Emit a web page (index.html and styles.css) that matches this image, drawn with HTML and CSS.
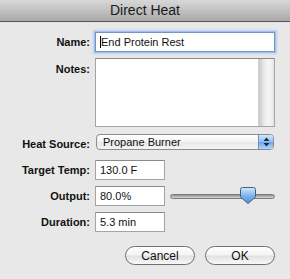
FILE: index.html
```html
<!DOCTYPE html>
<html>
  <head>
    <title>Direct Heat</title>
    <link rel="stylesheet" href="styles.css">
  </head>
  <body>
    <div class="window">
      <div class="titlebar">Direct Heat</div>
      <form class="sheet">
        <div class="lbl">Name:</div>
        <div class="field name focus"><span class="caret"></span>End Protein Rest</div>

        <div class="lbl top">Notes:</div>
        <div class="notes"><div class="scroll"></div></div>

        <div class="lbl">Heat Source:</div>
        <div class="popup">
          <span>Propane Burner</span>
          <span class="arrows">
            <svg width="7" height="10" viewBox="0 0 7 10">
              <path d="M3.5 0.5 L6.5 4 L0.5 4 Z M3.5 9.5 L6.5 6 L0.5 6 Z" fill="#1d2a44"/>
            </svg>
          </span>
        </div>

        <div class="lbl">Target Temp:</div>
        <div class="field short">130.0 F</div>

        <div class="lbl">Output:</div>
        <div class="with-slider">
          <div class="field short">80.0%</div>
          <div class="slider">
            <div class="track"></div>
            <svg class="thumb" width="16" height="17" viewBox="0 0 16 17">
              <defs>
                <linearGradient id="tg" x1="0" y1="0" x2="0" y2="1">
                  <stop offset="0" stop-color="#d6e9fb"/>
                  <stop offset="0.5" stop-color="#7fb6ec"/>
                  <stop offset="1" stop-color="#4a90de"/>
                </linearGradient>
              </defs>
              <path d="M2.5 0.5 H13.5 Q15.5 0.5 15.5 2.5 V10 L8 16.5 L0.5 10 V2.5 Q0.5 0.5 2.5 0.5 Z" fill="url(#tg)" stroke="#4a5d80"/>
            </svg>
          </div>
        </div>

        <div class="lbl">Duration:</div>
        <div class="field short">5.3 min</div>

        <div class="buttons">
          <button type="button" class="btn">Cancel</button>
          <button type="button" class="btn">OK</button>
        </div>
      </form>
    </div>
  </body>
</html>
```

FILE: styles.css
```css
body {
  margin: 0;
  background: #e8e8e8;
  font-family: "Liberation Sans", Arial, sans-serif;
}

.window {
  width: 290px;
  height: 279px;
  background: #e8e8e8;
}

.titlebar {
  height: 21px;
  line-height: 21px;
  text-align: center;
  font-size: 14px;
  color: #1a1a1a;
  background: linear-gradient(#d8d8d8, #a9a9a9);
  border-bottom: 1px solid #555;
}

.sheet {
  display: grid;
  grid-template-columns: 90px 180px;
  column-gap: 5px;
  row-gap: 6px;
  align-items: center;
  padding: 10px 15px 0 0;
}

.lbl {
  text-align: right;
  font-weight: bold;
  font-size: 11px;
  color: #111;
}

.lbl.top {
  align-self: start;
  margin-top: 5px;
}

.field {
  box-sizing: border-box;
  height: 20px;
  line-height: 18px;
  padding: 0 4px;
  font-size: 11px;
  color: #111;
  background: #fff;
  border: 1px solid #a4a4a4;
  border-top-color: #8a8a8a;
}

.field.focus {
  border-color: #6f97c8;
  box-shadow: 0 0 0 1px #9ec0ea, 0 0 2px 2px #b8d2f0;
}

.caret {
  display: inline-block;
  width: 1px;
  height: 12px;
  vertical-align: -2px;
  background: #000;
}

.short {
  width: 70px;
}

.notes {
  box-sizing: border-box;
  height: 69px;
  display: flex;
  justify-content: flex-end;
  background: #fff;
  border: 1px solid #a4a4a4;
  border-top-color: #8a8a8a;
}

.scroll {
  width: 15px;
  background: linear-gradient(90deg, #c9c9c9, #eeeeee 40%, #f6f6f6 70%, #e4e4e4);
  border-left: 1px solid #d0d0d0;
}

.popup {
  box-sizing: border-box;
  height: 16px;
  width: 178px;
  margin: 1px 0 4px 1px;
  display: flex;
  align-items: center;
  justify-content: space-between;
  font-size: 11px;
  color: #111;
  background: linear-gradient(#ffffff, #f2f2f2 50%, #e6e6e6 51%, #f4f4f4);
  border: 1px solid #8d8d8d;
  border-radius: 4px;
  padding-left: 6px;
  overflow: hidden;
}

.arrows {
  width: 14px;
  height: 100%;
  display: flex;
  align-items: center;
  justify-content: center;
  background: linear-gradient(#d2e6fa, #8fbff0 50%, #6aa6e6 51%, #b5d7f7);
  border-left: 1px solid #6a8fc0;
}

.with-slider {
  display: flex;
  align-items: center;
}

.slider {
  position: relative;
  margin-left: 5px;
  width: 105px;
  height: 20px;
  display: flex;
  align-items: center;
}

.track {
  width: 100%;
  height: 5px;
  border-radius: 3px;
  background: linear-gradient(#8a8a8a, #bdbdbd 60%, #d6d6d6);
  border: 1px solid #7d7d7d;
  box-sizing: border-box;
}

.thumb {
  position: absolute;
  left: 70px;
  top: 1px;
}

.buttons {
  grid-column: 1 / 3;
  display: flex;
  justify-content: flex-end;
  gap: 10px;
  margin-top: 8px;
}

.btn {
  box-sizing: border-box;
  width: 70px;
  height: 19px;
  padding: 0;
  font-family: "Liberation Sans", Arial, sans-serif;
  font-size: 12px;
  color: #111;
  background: linear-gradient(#ffffff, #f4f4f4 45%, #e2e2e2 55%, #f8f8f8);
  border: 1px solid #707070;
  border-radius: 10px;
}
```
